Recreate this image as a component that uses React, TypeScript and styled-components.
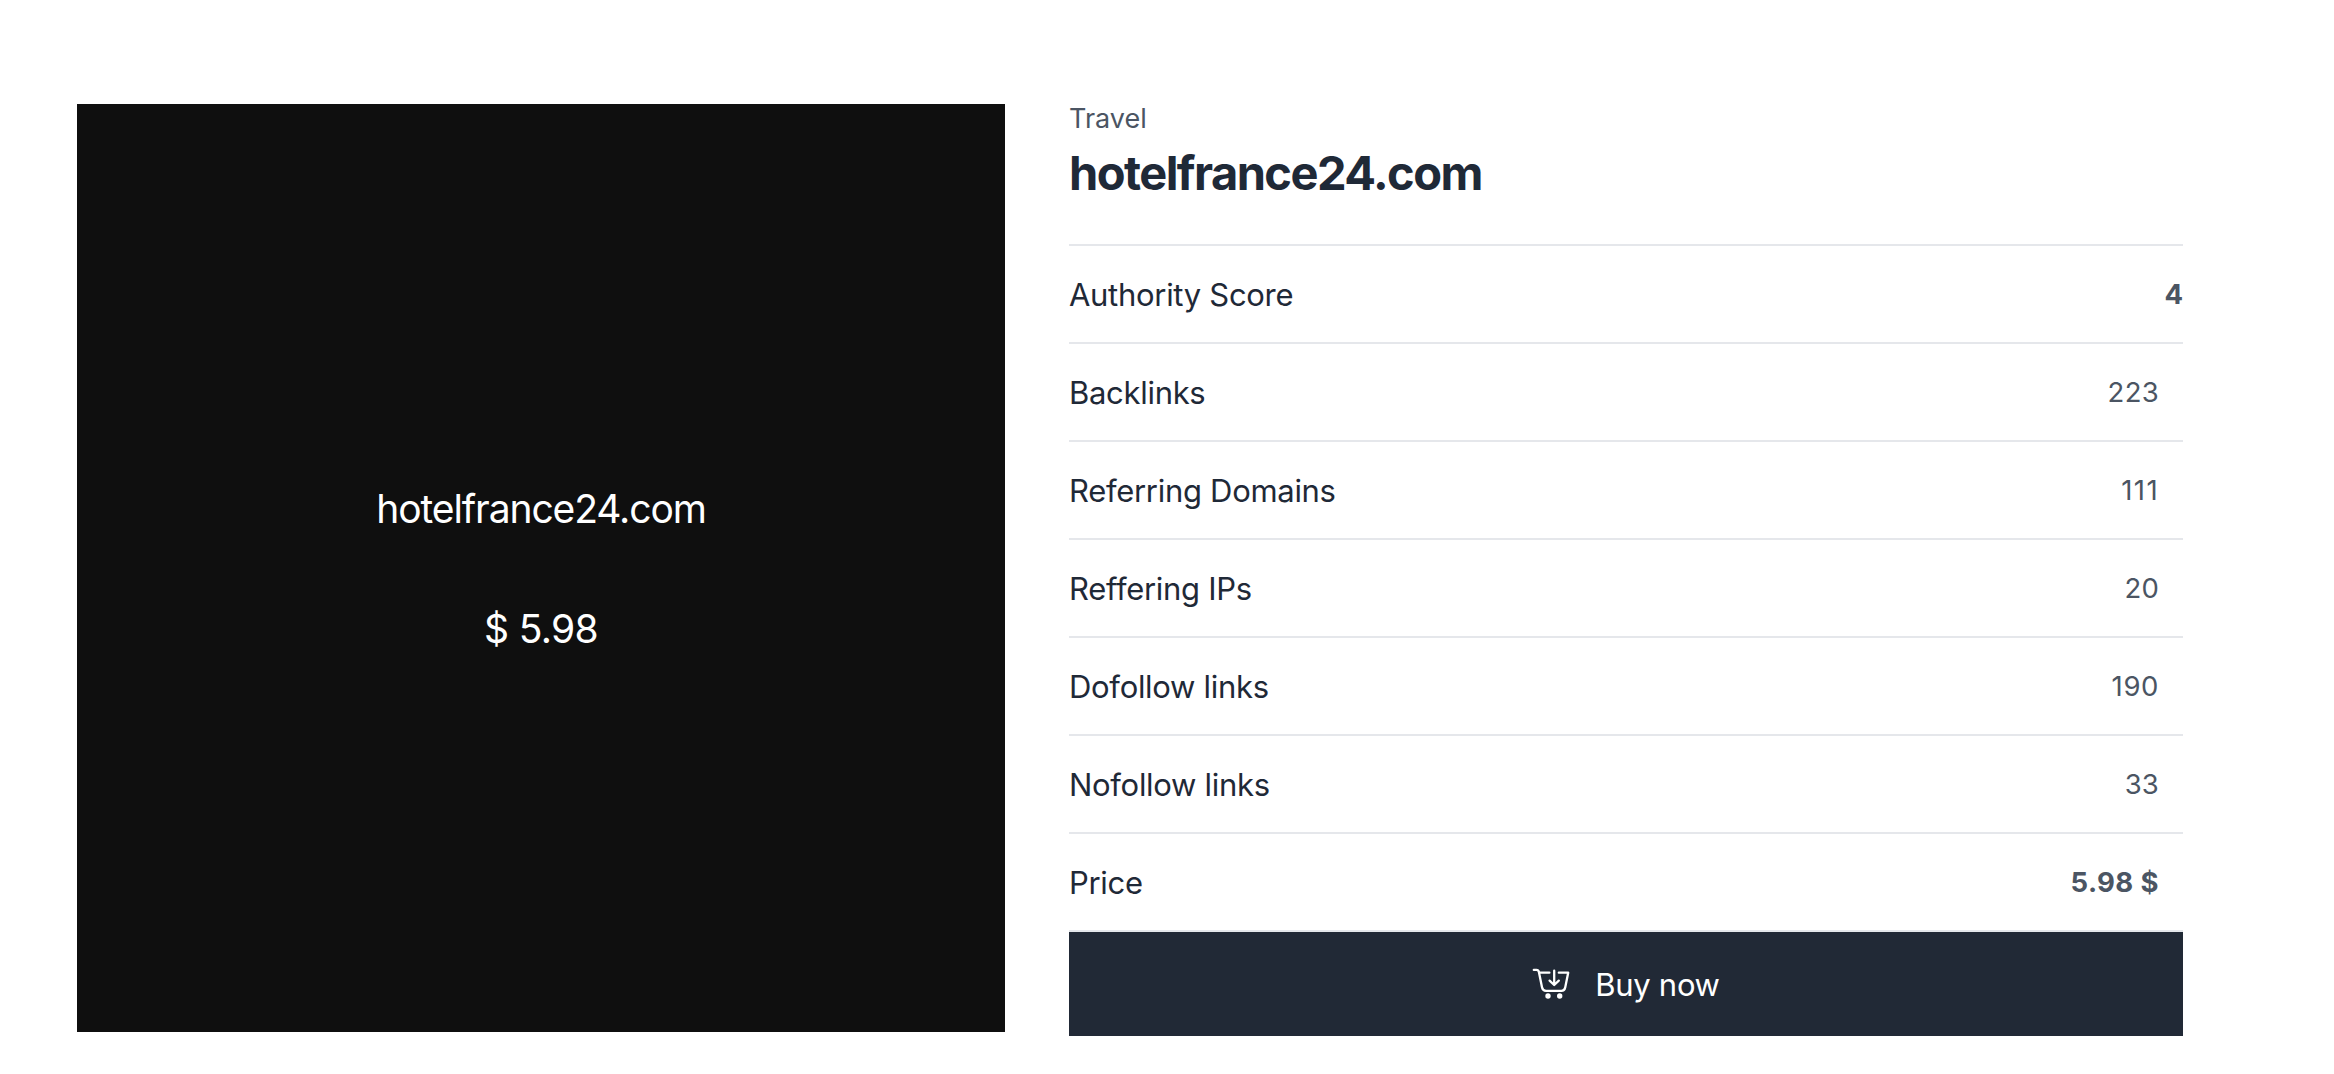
import styled, { createGlobalStyle } from "styled-components";

const stats = [
  { label: "Authority Score", value: "4", bold: true, flush: true },
  { label: "Backlinks", value: "223", spacing: 0.3 },
  { label: "Referring Domains", value: "111", spacing: 1.4 },
  { label: "Reffering IPs", value: "20", spacing: 0.2 },
  { label: "Dofollow links", value: "190", spacing: 0.6 },
  { label: "Nofollow links", value: "33", spacing: 0.2 },
  { label: "Price", value: "5.98 $", bold: true, spacing: 0.4 },
];

const CartIcon = () => (
  <svg width="38" height="32" viewBox="0 0 38 32" fill="none">
    <g
      stroke="currentColor"
      strokeWidth="2.3"
      strokeLinecap="round"
      strokeLinejoin="round"
    >
      <path d="M1.8 1.9H4.4C5.9 1.9 6.6 2.5 6.9 4L10 19.3C10.5 21.8 11.6 22.8 14 22.8H29.4C31.6 22.8 32.7 21.8 33.2 19.4L36.2 4.7H26.8" />
      <path d="M7.2 4.7H17.4" />
      <path d="M22.2 2.7V17M17.6 12.6L22.2 17L26.8 12.6" />
    </g>
    <circle cx="16" cy="28" r="2.7" fill="currentColor" />
    <circle cx="27.7" cy="28" r="2.7" fill="currentColor" />
  </svg>
);

export default function App() {
  return (
    <>
      <GlobalStyle />
      <StyledPage>
        <StyledCover>
          <StyledCoverText $spacing={-1.1}>hotelfrance24.com</StyledCoverText>
          <StyledCoverText $spacing={-0.65}>$ 5.98</StyledCoverText>
        </StyledCover>
        <StyledDetails>
          <StyledCategory>Travel</StyledCategory>
          <StyledTitle>hotelfrance24.com</StyledTitle>
          <StyledList>
            {stats.map(({ label, value, bold, flush, spacing }) => (
              <StyledRow key={label}>
                <StyledLabel>{label}</StyledLabel>
                <StyledValue $bold={bold} $flush={flush} $spacing={spacing}>
                  {value}
                </StyledValue>
              </StyledRow>
            ))}
          </StyledList>
          <StyledButton>
            <CartIcon />
            <span>Buy now</span>
          </StyledButton>
        </StyledDetails>
      </StyledPage>
    </>
  );
}

const GlobalStyle = createGlobalStyle`
  * {
    box-sizing: border-box;
  }

  body {
    margin: 0;
    background-color: #fff;
    font-family: Inter, "Liberation Sans", sans-serif;
    -webkit-font-smoothing: antialiased;
  }
`;

const StyledPage = styled.main`
  display: flex;
  align-items: flex-start;
  gap: 64px;
  padding: 104px 151px 0 77px;
`;

const StyledCover = styled.div`
  display: flex;
  flex-direction: column;
  align-items: center;
  justify-content: center;
  gap: 64px;
  flex: none;
  width: 928px;
  height: 928px;
  padding-top: 2px;
  background-color: #0f0f0f;
  color: #fff;
`;

const StyledCoverText = styled.p<{ $spacing: number }>`
  margin: 0;
  font-size: 39px;
  line-height: 56px;
  letter-spacing: ${({ $spacing }) => $spacing}px;
`;

const StyledDetails = styled.section`
  flex: 1;
`;

const StyledCategory = styled.p`
  margin: 0;
  padding-top: 1px;
  color: #4b5563;
  font-size: 27px;
  line-height: 28px;
`;

const StyledTitle = styled.h1`
  margin: 8px 0 39px;
  color: #1f2937;
  font-size: 47px;
  font-weight: 700;
  line-height: 64px;
  letter-spacing: -1.55px;
`;

const StyledList = styled.div`
  border-bottom: 2px solid #e5e7eb;
`;

const StyledRow = styled.div`
  display: flex;
  align-items: center;
  justify-content: space-between;
  height: 98px;
  border-top: 2px solid #e5e7eb;
`;

const StyledLabel = styled.span`
  color: #1f2937;
  font-size: 31px;
  letter-spacing: -0.3px;
`;

const StyledValue = styled.span<{
  $bold?: boolean;
  $flush?: boolean;
  $spacing?: number;
}>`
  padding-right: ${({ $flush }) => ($flush ? 0 : 24)}px;
  color: #4b5563;
  font-size: 27.5px;
  font-weight: ${({ $bold }) => ($bold ? 700 : 400)};
  letter-spacing: ${({ $spacing = 0 }) => $spacing}px;
`;

const StyledButton = styled.button`
  display: flex;
  align-items: center;
  justify-content: center;
  gap: 25px;
  width: 100%;
  height: 104px;
  padding: 0;
  border: 0;
  background-color: #212936;
  color: #fff;
  font-family: inherit;
  font-size: 31px;
  letter-spacing: -0.3px;
`;
